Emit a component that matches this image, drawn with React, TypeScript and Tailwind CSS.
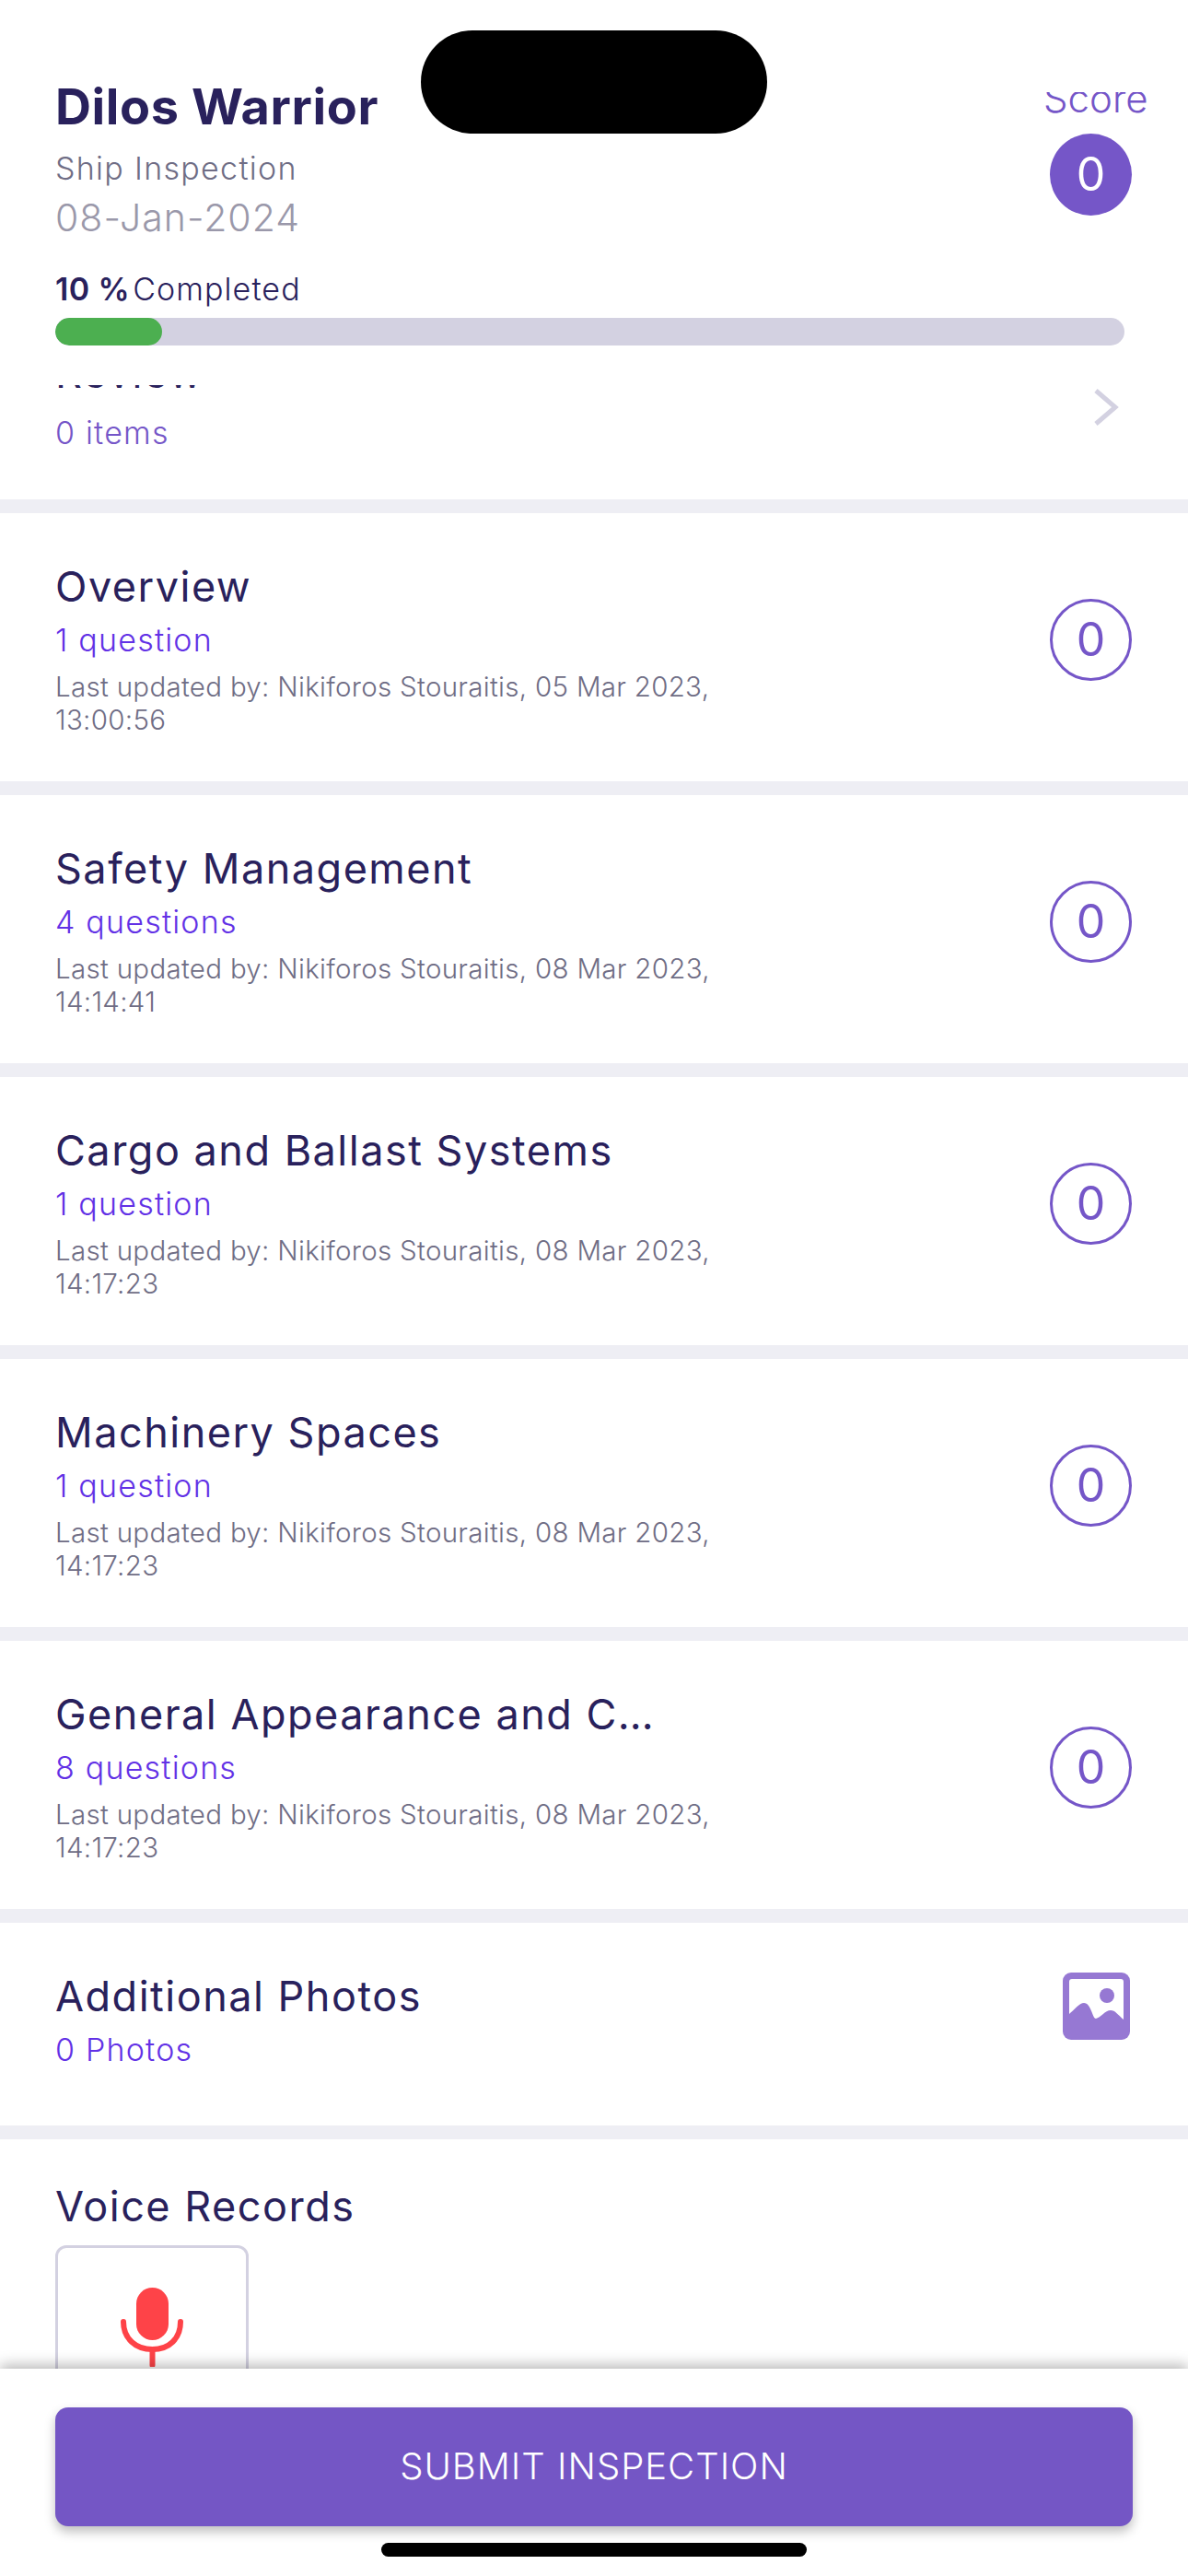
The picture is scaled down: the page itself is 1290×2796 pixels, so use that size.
type Section = {
  title: string;
  count: string;
  date: string;
  time: string;
};

const sections: Section[] = [
  { title: "Overview", count: "1 question", date: "05 Mar 2023", time: "13:00:56" },
  { title: "Safety Management", count: "4 questions", date: "08 Mar 2023", time: "14:14:41" },
  { title: "Cargo and Ballast Systems", count: "1 question", date: "08 Mar 2023", time: "14:17:23" },
  { title: "Machinery Spaces", count: "1 question", date: "08 Mar 2023", time: "14:17:23" },
  { title: "General Appearance and C…", count: "8 questions", date: "08 Mar 2023", time: "14:17:23" },
];

function PhotoIcon() {
  return (
    <svg width="73" height="73" viewBox="0 0 73 73">
      <rect width="73" height="73" rx="9" fill="#9678d3" />
      <path d="M10 7H63C65 7 66 8 66 10V51C60 46 57 41 52 41C46 41 41 49 36 50C32 50 31 33 23 33C18 33 12 41 7 45V10C7 8 8 7 10 7Z" fill="#fff" />
      <circle cx="48" cy="25" r="8" fill="#9678d3" />
    </svg>
  );
}

function MicIcon() {
  return (
    <svg width="68" height="86" viewBox="0 0 68 86" className="shrink-0">
      <rect x="17" y="0" width="35" height="57" rx="17.5" fill="#fe4348" />
      <path d="M3 37C3 55 16 67 34.500 67C53 67 65 55 65 37" fill="none" stroke="#fe4348" strokeWidth="6" strokeLinecap="round" />
      <path d="M34.500 67V84" fill="none" stroke="#fe4348" strokeWidth="6" strokeLinecap="round" />
    </svg>
  );
}

function SectionRow({ section }: { section: Section }) {
  return (
    <div className="flex h-[291px] shrink-0 items-center justify-between bg-white pl-[60px] pr-[61px]">
      <div className="w-[760px] pt-[3px]">
        <p className="text-[45px] leading-[54px] tracking-[1.5px] text-[#29215c]">{section.title}</p>
        <p className="mt-[10px] text-[34px] font-light leading-[42px] tracking-[1.2px] text-[#6231e6]">{section.count}</p>
        <p className="mt-[11px] text-[29.5px] font-light leading-[36px] tracking-[0.3px] text-[#6f6d85]">
          Last updated by: Nikiforos Stouraitis, {section.date},
          <br />
          {section.time}
        </p>
      </div>
      <div className="mb-[16px] flex h-[89px] w-[89px] shrink-0 items-center justify-center rounded-full border-[3px] border-[#7556c8] text-[50px] text-[#7556c8]">
        0
      </div>
    </div>
  );
}

export default function App() {
  return (
    <div className="relative flex h-[2796px] w-[1290px] flex-col overflow-hidden bg-[#eeeef4] font-['Inter',sans-serif]">
      {/* camera cutout */}
      <div className="absolute left-[457px] top-[33px] z-20 h-[112px] w-[376px] rounded-[56px] bg-black" />

      <header className="flex h-[416px] shrink-0 flex-col bg-white pl-[60px] pr-[61px]">
        <div className="flex justify-between">
          <div>
            <h1 className="mt-[84px] text-[54px] font-bold leading-[64px] tracking-[0.6px] text-[#29215c]">Dilos Warrior</h1>
            <p className="mt-[14px] text-[34px] font-light leading-[42px] tracking-[1.3px] text-[#6f6d85]">Ship Inspection</p>
            <p className="mt-[7px] text-[41px] font-light leading-[50px] tracking-[1px] text-[#9a98aa]">08-Jan-2024</p>
          </div>
          <div className="flex w-[89px] flex-col items-start">
            <div className="mt-[100px] -ml-[7px] h-[30px] w-[130px] overflow-hidden">
              <p className="-mt-[19px] whitespace-nowrap text-[42px] font-light leading-[51px] text-[#7556c8]">Score</p>
            </div>
            <div className="mt-[15px] flex h-[89px] w-[89px] items-center justify-center rounded-full bg-[#7556c8] text-[50px] text-white">
              0
            </div>
          </div>
        </div>
        <p className="mt-[32px] flex gap-[3px] text-[34px] leading-[42px] text-[#29215c]">
          <span className="font-semibold tracking-[0.4px]">10 %</span>
          <span className="font-light tracking-[1.1px]">Completed</span>
        </p>
        <div className="mt-[10px] h-[30px] w-[1161px] overflow-hidden rounded-full bg-[#d3d1e1]">
          <div className="h-full w-[116px] rounded-full bg-[#4caf50]" />
        </div>
      </header>

      <div className="flex min-h-0 flex-1 flex-col gap-[15px] overflow-hidden">
        <div className="flex h-[126px] shrink-0 items-start justify-between bg-white pl-[60px] pr-[61px]">
          <div>
            <div className="mt-[2px] h-[4px] overflow-hidden">
              <p className="-mt-[40px] text-[45px] leading-[54px] tracking-[1.5px] text-[#29215c]">Review</p>
            </div>
            <p className="mt-[27px] text-[34px] font-light leading-[42px] tracking-[1.2px] text-[#7556c8]">0 items</p>
          </div>
          <svg width="30" height="40" viewBox="0 0 30 40" className="mr-[14px] mt-[6px]">
            <path d="M5 2L26 20L5 38" fill="none" stroke="#d3d1e1" strokeWidth="5" />
          </svg>
        </div>

        {sections.map((section) => (
          <SectionRow key={section.title} section={section} />
        ))}

        <div className="flex h-[220px] shrink-0 items-start justify-between bg-white pl-[60px] pr-[63px]">
          <div>
            <p className="mt-[53px] text-[45px] leading-[54px] tracking-[1.5px] text-[#29215c]">Additional Photos</p>
            <p className="mt-[10px] text-[34px] font-light leading-[42px] tracking-[1.2px] text-[#6231e6]">0 Photos</p>
          </div>
          <div className="mt-[54px]">
            <PhotoIcon />
          </div>
        </div>

        <div className="flex-1 bg-white pl-[60px] pr-[61px]">
          <p className="mt-[46px] text-[45px] leading-[54px] tracking-[1.5px] text-[#29215c]">Voice Records</p>
          <div className="mt-[15px] flex h-[200px] w-[210px] justify-center rounded-[12px] border-[3px] border-[#d3d1e1] pt-[43px]">
            <MicIcon />
          </div>
        </div>
      </div>

      <footer className="relative z-10 flex h-[225px] shrink-0 flex-col bg-white px-[60px] pt-[42px] shadow-[0_-4px_14px_rgba(0,0,0,0.28)]">
        <button className="h-[129px] w-full rounded-[14px] bg-[#7456c5] pb-[2px] text-[40px] font-light tracking-[1px] text-white shadow-[0_6px_12px_rgba(0,0,0,0.25)]">
          SUBMIT INSPECTION
        </button>
      </footer>

      {/* home indicator */}
      <div className="absolute left-[414px] top-[2760px] z-20 h-[15px] w-[462px] rounded-full bg-black" />
    </div>
  );
}
